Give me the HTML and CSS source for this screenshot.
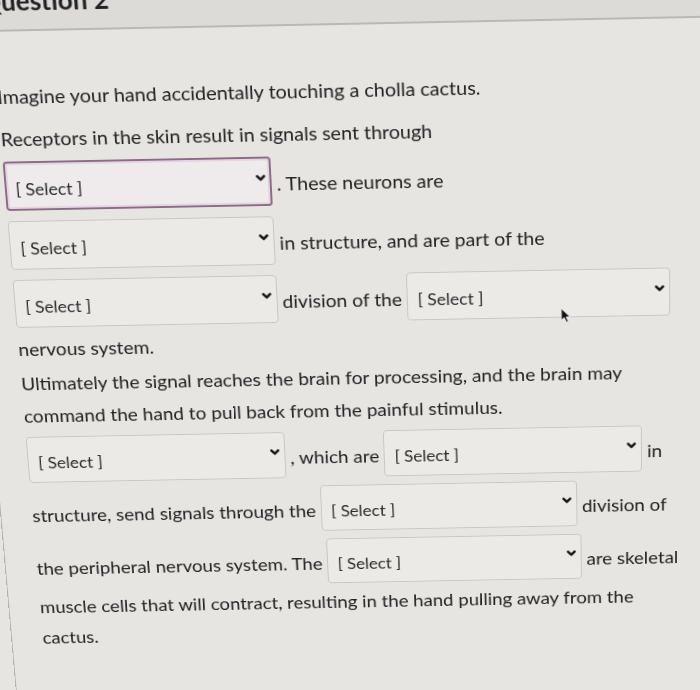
FILE: index.html
```html
<!DOCTYPE html>
<html lang="en">
<head>
<meta charset="utf-8">
<title>Question 2</title>
<link rel="stylesheet" href="styles.css">
</head>
<body>
<div class="question">
  <div class="header"><h2 class="title">Question 2</h2></div>
  <div class="content">
    <p class="para first">Imagine your hand accidentally touching a cholla cactus.</p>
    <p class="para second">Receptors in the skin result in signals sent through <span class="select focused" role="combobox"><span class="sel-text">[ Select ]</span><svg class="chev" viewBox="0 0 10 7" width="10" height="7"><path d="M1.5 1.5 L5 5 L8.5 1.5"/></svg></span> . These neurons are <span class="select" role="combobox"><span class="sel-text">[ Select ]</span><svg class="chev" viewBox="0 0 10 7" width="10" height="7"><path d="M1.5 1.5 L5 5 L8.5 1.5"/></svg></span> in structure, and are part of the <span class="select" role="combobox"><span class="sel-text">[ Select ]</span><svg class="chev" viewBox="0 0 10 7" width="10" height="7"><path d="M1.5 1.5 L5 5 L8.5 1.5"/></svg></span> division of the <span class="select" role="combobox"><span class="sel-text">[ Select ]</span><svg class="chev" viewBox="0 0 10 7" width="10" height="7"><path d="M1.5 1.5 L5 5 L8.5 1.5"/></svg></span> nervous system.</p>
    <p class="para third">Ultimately the signal reaches the brain for processing, and the brain may command the hand to pull back from the painful stimulus. <span class="select" role="combobox"><span class="sel-text">[ Select ]</span><svg class="chev" viewBox="0 0 10 7" width="10" height="7"><path d="M1.5 1.5 L5 5 L8.5 1.5"/></svg></span> , which are <span class="select" role="combobox"><span class="sel-text">[ Select ]</span><svg class="chev" viewBox="0 0 10 7" width="10" height="7"><path d="M1.5 1.5 L5 5 L8.5 1.5"/></svg></span> in structure, send signals through the <span class="select" role="combobox"><span class="sel-text">[ Select ]</span><svg class="chev" viewBox="0 0 10 7" width="10" height="7"><path d="M1.5 1.5 L5 5 L8.5 1.5"/></svg></span> division of the peripheral nervous system. The <span class="select" role="combobox"><span class="sel-text">[ Select ]</span><svg class="chev" viewBox="0 0 10 7" width="10" height="7"><path d="M1.5 1.5 L5 5 L8.5 1.5"/></svg></span> are skeletal muscle cells that will contract, resulting in the hand pulling away from the cactus.</p>
  </div>
  <svg class="cursor" viewBox="0 0 12 19" width="11" height="18"><path d="M1 1 L1 15 L4.3 12 L6.8 17.5 L9 16.6 L6.6 11.2 L11 11.2 Z"/></svg>
</div>
</body>
</html>
```

FILE: styles.css
```css
html, body {
  margin: 0;
  padding: 0;
  background: #e6e5e1;
  overflow: hidden;
}

body {
  width: 700px;
  height: 690px;
  font-family: Lato, "Noto Sans", sans-serif;
  color: #222222;
}

/* the photo was taken at an angle: the page is laid out flat,
   then tilted away at the bottom and sheared slightly */
.question {
  position: relative;
  display: flow-root;
  margin-left: -45px;
  width: 825px;
  height: 820px;
  border-left: 1px solid #b4b3af;
  transform-origin: 45px 0;
  transform: perspective(1000px) rotateX(-7deg) matrix(1, -0.02, 0.082, 1, 0, 0);
}

.header {
  display: flex;
  height: 30px;
  padding-left: 24px;
  background: #dcdbd7;
  border-bottom: 2px solid #b9b8b4;
}

.title {
  margin: -12px 0 0 0;
  font-size: 26px;
  line-height: 26px;
  font-weight: 700;
  color: #222222;
}

.content {
  width: 697px;
  padding-left: 33px;
}

.para {
  margin: 0;
  font-size: 20px;
  line-height: 36px;
}

.para.first {
  margin-top: 48px;
  margin-bottom: 8px;
}

.para.second {
  margin-bottom: 2px;
}

.select {
  display: inline-flex;
  justify-content: space-between;
  align-items: flex-start;
  box-sizing: border-box;
  width: 273px;
  height: 52px;
  margin: 6px 0 5px 0;
  padding: 19px 5px 0 10px;
  border: 1px solid #c7c6c2;
  border-radius: 4px;
  background: #ebeae6;
  vertical-align: baseline;
}

.para.third .select {
  margin-bottom: 3px;
}

.select.focused {
  border: 2px solid #8d6b87;
  padding: 18px 4px 0 9px;
  background: #efeaec;
  box-shadow: inset 0 0 0 2px #e4d6df;
}

.sel-text {
  font-size: 18px;
  line-height: 18px;
  color: #2a2a2a;
}

.chev {
  margin-top: -1px;
  flex: none;
}

.chev path {
  fill: none;
  stroke: #1a1a1a;
  stroke-width: 2.6;
  stroke-linecap: round;
  stroke-linejoin: round;
}

.cursor {
  position: absolute;
  left: 599px;
  top: 333px;
}

.cursor path {
  fill: #111;
  stroke: #f4f4f4;
  stroke-width: 1;
  stroke-linejoin: round;
}
```
